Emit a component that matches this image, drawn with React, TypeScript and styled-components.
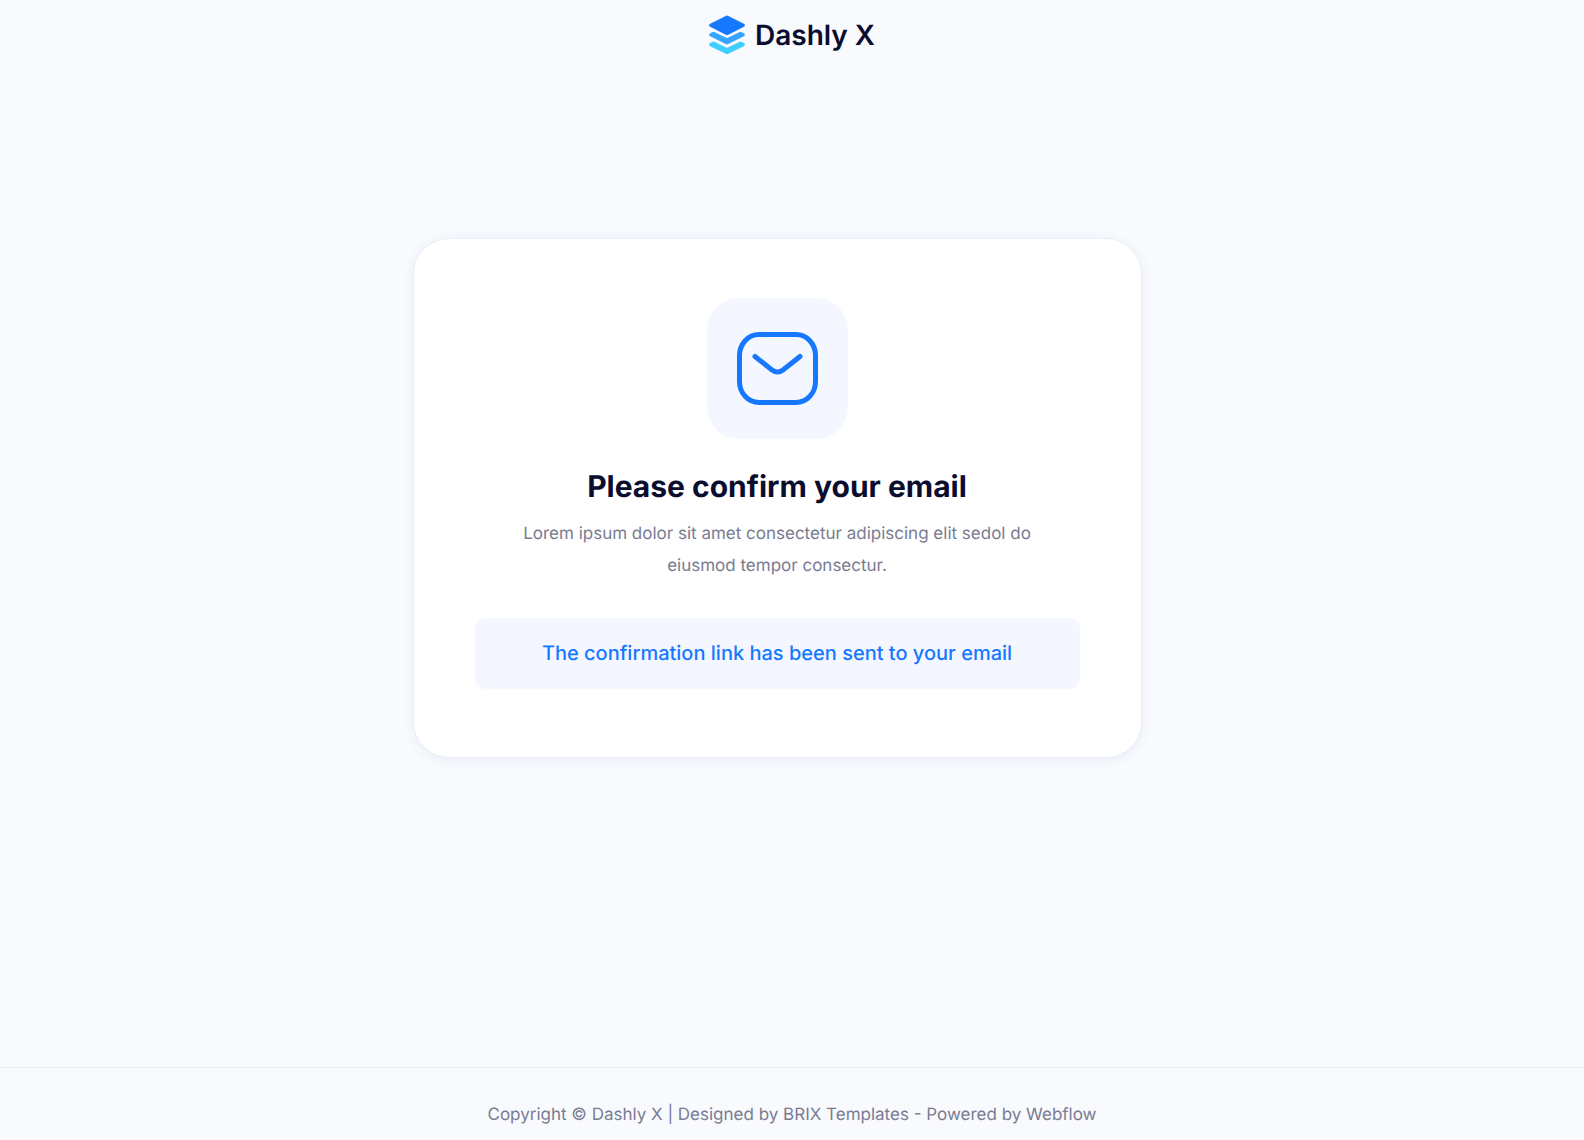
import React from "react";
import styled, { createGlobalStyle } from "styled-components";

const GlobalStyle = createGlobalStyle`
  *, *::before, *::after { box-sizing: border-box; }
  body {
    margin: 0;
    background: #f8fafe;
    color: #0a0d2e;
    font-family: Inter, "Liberation Sans", sans-serif;
    text-rendering: geometricPrecision;
  }
`;

const Page = styled.div`
  display: flex;
  flex-direction: column;
  min-height: 100vh;
`;

const Header = styled.header`
  display: flex;
  justify-content: center;
  padding: 15px 24px;
`;

const Brand = styled.a`
  display: flex;
  align-items: center;
  gap: 10px;
  color: inherit;
  font-size: 28px;
  font-weight: 600;
  line-height: 40px;
  text-decoration: none;
`;

const Main = styled.main`
  flex: 1;
  display: flex;
  justify-content: center;
  align-items: flex-start;
  padding: 168px 30px 48px 0;
`;

const Card = styled.section`
  display: flex;
  flex-direction: column;
  align-items: center;
  width: 100%;
  max-width: 729px;
  padding: 59px 61px 68px;
  border: 1px solid #ebeefa;
  border-radius: 36px;
  background: #ffffff;
  box-shadow: 0 2px 12px rgba(20, 60, 130, 0.07);
  text-align: center;
`;

const IconTile = styled.div`
  display: grid;
  place-items: center;
  width: 141px;
  height: 141px;
  border-radius: 32px;
  background: #f4f7ff;
`;

const Title = styled.h1`
  margin: 28px 0 11px;
  font-size: 30px;
  font-weight: 700;
  line-height: 40px;
`;

const Description = styled.p`
  max-width: 540px;
  margin: 0 0 36px;
  color: #7a7c92;
  font-size: 17px;
  line-height: 32px;
`;

const Notice = styled.div`
  width: 100%;
  padding: 20px 24px;
  border-radius: 10px;
  background: #f4f7ff;
  color: #1677ff;
  font-size: 20px;
  font-weight: 500;
  line-height: 31px;
`;

const Footer = styled.footer`
  padding: 31px 24px 9px;
  border-top: 1px solid #eaecf2;
  color: #7a7c92;
  font-size: 17px;
  line-height: 32px;
  text-align: center;
`;

const FooterLink = styled.a`
  color: inherit;
  text-decoration: none;
`;

function LogoMark() {
  return (
    <svg width="36" height="40" viewBox="0 0 36 40" aria-hidden="true" strokeLinejoin="round" strokeWidth="3.4">
      <path d="M18 2.2 34.1 10.3 18 18.4 1.9 10.3Z" fill="#1677ff" stroke="#1677ff" />
      <path d="M1.9 19.8 4.6 18.5 18 25 31.4 18.5 34.1 19.8 18 27.6Z" fill="#36a5ff" stroke="#36a5ff" />
      <path d="M1.9 29.6 4.6 28.3 18 34.8 31.4 28.3 34.1 29.6 18 37.4Z" fill="#3fcfff" stroke="#3fcfff" />
    </svg>
  );
}

function MailIcon() {
  return (
    <svg width="81" height="73" viewBox="0 0 81 73" fill="none" stroke="#1677ff" strokeWidth="5" aria-hidden="true">
      <path d="M22 2.5H59C70 2.5 78.5 12 78.5 23.5V49.5C78.5 61 70 70.5 59 70.5H22C11 70.5 2.5 61 2.5 49.5V23.5C2.5 12 11 2.5 22 2.5Z" />
      <path d="M18 24.5 35 38Q40.5 42 46 38L63 24.5" strokeLinecap="round" />
    </svg>
  );
}

export default function App() {
  return (
    <>
      <GlobalStyle />
      <Page>
        <Header>
          <Brand href="#">
            <LogoMark />
            Dashly X
          </Brand>
        </Header>
        <Main>
          <Card>
            <IconTile>
              <MailIcon />
            </IconTile>
            <Title>Please confirm your email</Title>
            <Description>
              Lorem ipsum dolor sit amet consectetur adipiscing elit sedol do eiusmod tempor consectur.
            </Description>
            <Notice role="status">The confirmation link has been sent to your email</Notice>
          </Card>
        </Main>
        <Footer>
          Copyright © Dashly X | Designed by <FooterLink href="#">BRIX Templates</FooterLink> - Powered by{" "}
          <FooterLink href="#">Webflow</FooterLink>
        </Footer>
      </Page>
    </>
  );
}
